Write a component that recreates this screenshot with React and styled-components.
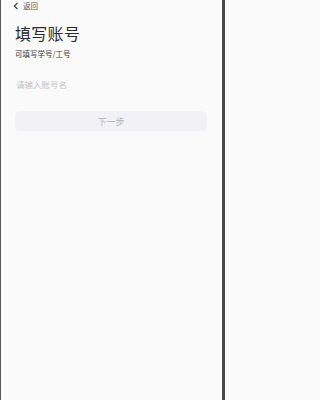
import React from "react"
import styled, { createGlobalStyle } from "styled-components"

const GlobalStyle = createGlobalStyle`
  html, body {
    margin: 0;
    padding: 0;
    background: #fafafa;
  }
  * {
    box-sizing: border-box;
  }
`

const Screen = styled.div`
  width: 225px;
  height: 400px;
  background: #fafafa;
  border-left: 1px solid #5a5a5a;
  border-right: 3px solid #4a4a4a;
  font-family: "Noto Sans CJK SC", "Noto Sans", sans-serif;
  color: #2b2b2b;
  display: flex;
  flex-direction: column;
`

const TopBar = styled.div`
  height: 11px;
  display: flex;
  align-items: center;
  gap: 4px;
  padding-left: 12px;
  color: #444;
`

const BackLabel = styled.span`
  font-size: 7.5px;
  line-height: 1;
  color: #555;
`

const Content = styled.div`
  padding: 0 14px;
  display: flex;
  flex-direction: column;
`

const Title = styled.h1`
  margin: 12px 0 0;
  font-size: 16px;
  font-weight: 400;
  line-height: 20px;
  letter-spacing: 0.3px;
  color: #2a2a2a;
`

const Hint = styled.p`
  margin: 6px 0 0;
  font-size: 7.5px;
  line-height: 10px;
  color: #333;
`

const Field = styled.input`
  margin-top: 18px;
  border: none;
  outline: none;
  background: transparent;
  padding: 0 0 0 1px;
  height: 14px;
  font-family: inherit;
  font-size: 8.5px;
  color: #333;
  &::placeholder {
    color: #c2c2c2;
  }
`

const NextButton = styled.button`
  margin-top: 20px;
  height: 20px;
  border: none;
  border-radius: 5px;
  background: #f1f1f6;
  color: #b4b4b8;
  font-family: inherit;
  font-size: 9px;
  padding: 0;
  margin-right: 1px;
`

export default function App() {
  return (
    <>
      <GlobalStyle />
      <Screen>
        <TopBar>
          <svg width="6" height="8" viewBox="0 0 6 8">
            <path d="M4.5 0.8 L1.3 4 L4.5 7.2" fill="none" stroke="#333" strokeWidth="1.1" />
          </svg>
          <BackLabel>返回</BackLabel>
        </TopBar>
        <Content>
          <Title>填写账号</Title>
          <Hint>可填写学号/工号</Hint>
          <Field placeholder="请输入账号名" />
          <NextButton>下一步</NextButton>
        </Content>
      </Screen>
    </>
  )
}
